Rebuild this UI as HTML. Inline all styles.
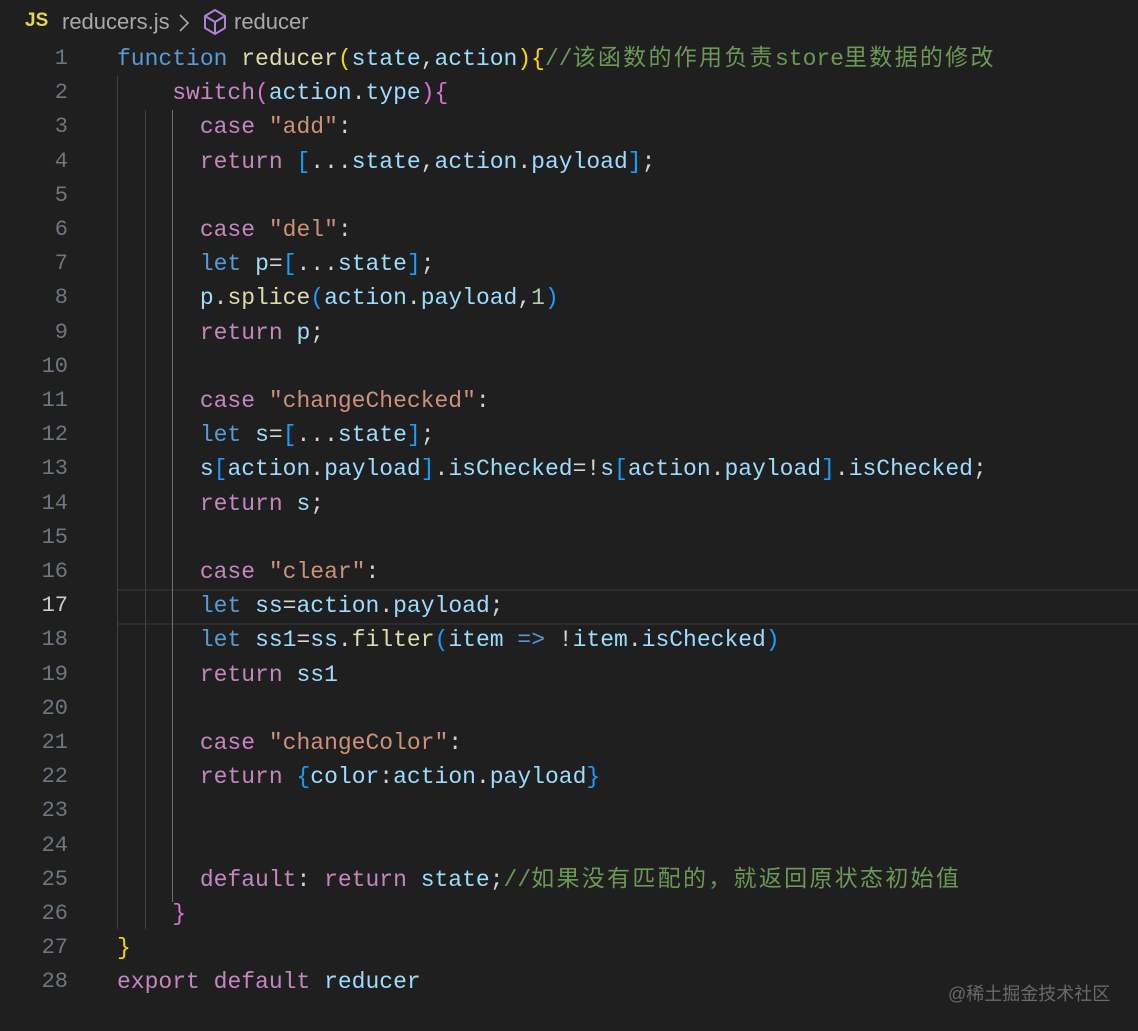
<!DOCTYPE html>
<html><head><meta charset="utf-8"><style>
body{margin:0;width:1138px;height:1031px;background:#1f1f1f;overflow:hidden;position:relative;font-family:"Liberation Mono","Noto Sans CJK SC",monospace;}
.hdr{position:absolute;top:0;left:0;width:1138px;height:42px;font-family:"Liberation Sans",sans-serif;font-size:22px;color:#a9a9a9;}
.hdr span,.hdr svg{position:absolute}
.hdr .js{left:25px;top:10px;color:#e8d44d;font-weight:bold;font-size:19px}
.ln{position:absolute;left:0;width:68px;text-align:right;color:#6e7681;font-size:22px;line-height:34.2px;}
.code{position:absolute;left:117px;font-size:23px;line-height:34.2px;white-space:pre;color:#d4d4d4}
.g{position:absolute;width:1px;background:#404040}
.k{color:#569cd6}.c{color:#c586c0}.f{color:#dcdcaa}.v{color:#9cdcfe}.s{color:#ce9178}.m{color:#6a9955}.n{color:#b5cea8}
.b1{color:#ffd700}.b2{color:#da70d6}.b3{color:#179fff}
.cj{font-size:23px;letter-spacing:2.3px}
.hl{position:absolute;left:117px;width:1021px;top:589px;height:32px;border-top:2px solid #2c2c2c;border-bottom:2px solid #2c2c2c}
.wm{position:absolute;left:948px;top:980px;font-family:"Liberation Sans","Noto Sans CJK SC",sans-serif;font-size:18px;color:#6a6a6a}
</style></head><body>
<div class="hdr"><span class="js">JS</span><span style="left:62px;top:9px">reducers.js</span><svg style="left:178px;top:12px" width="12" height="22" viewBox="0 0 12 22"><path d="M2 3 L10 11 L2 19" fill="none" stroke="#a9a9a9" stroke-width="1.6"/></svg><svg style="left:202px;top:8px" width="26" height="28" viewBox="0 0 26 28"><path d="M13 2 L23 8 L23 20 L13 26 L3 20 L3 8 Z M3 8 L13 14 L23 8 M13 14 L13 26" fill="none" stroke="#b180d7" stroke-width="2" stroke-linejoin="round"/></svg><span style="left:234px;top:9px">reducer</span></div>
<div class="hl"></div>
<div class="g" style="left:117px;top:76px;height:853px"></div>
<div class="g" style="left:145px;top:110px;height:819px"></div>
<div class="g" style="left:172px;top:110px;height:792px;background:#707070"></div>
<div class="code" style="top:42px"><span class="k">function</span> <span class="f">reducer</span><span class="b1">(</span><span class="v">state</span>,<span class="v">action</span><span class="b1">)</span><span class="b1">{</span><span class="m">//<span class="cj">该函数的作用负责</span>store<span class="cj">里数据的修改</span></span>
    <span class="c">switch</span><span class="b2">(</span><span class="v">action</span>.<span class="v">type</span><span class="b2">)</span><span class="b2">{</span>
      <span class="c">case</span> <span class="s">"add"</span>:
      <span class="c">return</span> <span class="b3">[</span>...<span class="v">state</span>,<span class="v">action</span>.<span class="v">payload</span><span class="b3">]</span>;

      <span class="c">case</span> <span class="s">"del"</span>:
      <span class="k">let</span> <span class="v">p</span>=<span class="b3">[</span>...<span class="v">state</span><span class="b3">]</span>;
      <span class="v">p</span>.<span class="f">splice</span><span class="b3">(</span><span class="v">action</span>.<span class="v">payload</span>,<span class="n">1</span><span class="b3">)</span>
      <span class="c">return</span> <span class="v">p</span>;

      <span class="c">case</span> <span class="s">"changeChecked"</span>:
      <span class="k">let</span> <span class="v">s</span>=<span class="b3">[</span>...<span class="v">state</span><span class="b3">]</span>;
      <span class="v">s</span><span class="b3">[</span><span class="v">action</span>.<span class="v">payload</span><span class="b3">]</span>.<span class="v">isChecked</span>=!<span class="v">s</span><span class="b3">[</span><span class="v">action</span>.<span class="v">payload</span><span class="b3">]</span>.<span class="v">isChecked</span>;
      <span class="c">return</span> <span class="v">s</span>;

      <span class="c">case</span> <span class="s">"clear"</span>:
      <span class="k">let</span> <span class="v">ss</span>=<span class="v">action</span>.<span class="v">payload</span>;
      <span class="k">let</span> <span class="v">ss1</span>=<span class="v">ss</span>.<span class="f">filter</span><span class="b3">(</span><span class="v">item</span> <span class="k">=&gt;</span> !<span class="v">item</span>.<span class="v">isChecked</span><span class="b3">)</span>
      <span class="c">return</span> <span class="v">ss1</span>

      <span class="c">case</span> <span class="s">"changeColor"</span>:
      <span class="c">return</span> <span class="b3">{</span><span class="v">color</span>:<span class="v">action</span>.<span class="v">payload</span><span class="b3">}</span>


      <span class="c">default</span>: <span class="c">return</span> <span class="v">state</span>;<span class="m">//<span class="cj">如果没有匹配的，就返回原状态初始值</span></span>
    <span class="b2">}</span>
<span class="b1">}</span>
<span class="c">export</span> <span class="c">default</span> <span class="v">reducer</span></div>
<div class="ln" style="top:42px">1<br>2<br>3<br>4<br>5<br>6<br>7<br>8<br>9<br>10<br>11<br>12<br>13<br>14<br>15<br>16<br><span style="color:#ccc">17</span><br>18<br>19<br>20<br>21<br>22<br>23<br>24<br>25<br>26<br>27<br>28</div>
<div class="wm">@稀土掘金技术社区</div>
</body></html>
